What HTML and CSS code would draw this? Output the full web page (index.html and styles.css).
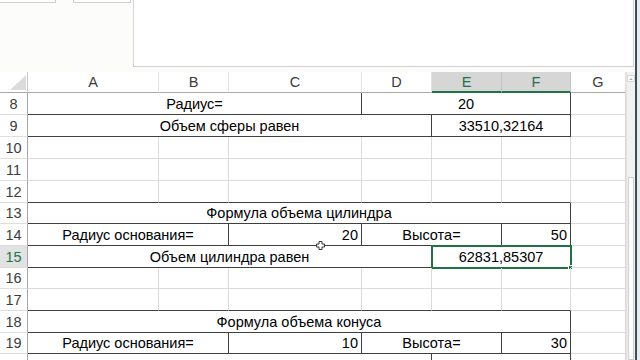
FILE: index.html
```html
<!DOCTYPE html>
<html lang="ru">
<head>
<meta charset="utf-8">
<title>Excel</title>
<link rel="stylesheet" href="styles.css">
</head>
<body>
<div class="app">
  <div class="main">
    <div class="top">
      <div class="tabs">
        <span class="tb tb1"></span>
        <span class="tb tb2"></span>
      </div>
      <div class="fbar"></div>
    </div>
    <div class="sheetwrap">
      <div class="grid">
        <div class="corner"><svg width="28" height="21" viewBox="0 0 28 21"><polygon points="10,18 26,18 26,3" fill="#dcdcdc"/></svg></div>
        <div class="ch">A</div>
        <div class="ch">B</div>
        <div class="ch">C</div>
        <div class="ch">D</div>
        <div class="ch sel">E</div>
        <div class="ch sel">F</div>
        <div class="ch">G</div>

        <div class="rh">8</div>
        <div class="c t s3 ctr">Радиус=</div>
        <div class="c t s3 ctr">20</div>
        <div class="c"></div>

        <div class="rh">9</div>
        <div class="c t s4 ctr">Объем сферы равен</div>
        <div class="c t s2 ctr">33510,32164</div>
        <div class="c"></div>

        <div class="rh">10</div>
        <div class="c"></div><div class="c"></div><div class="c"></div><div class="c"></div><div class="c"></div><div class="c"></div><div class="c"></div>

        <div class="rh">11</div>
        <div class="c"></div><div class="c"></div><div class="c"></div><div class="c"></div><div class="c"></div><div class="c"></div><div class="c"></div>

        <div class="rh">12</div>
        <div class="c bb"></div><div class="c bb"></div><div class="c bb"></div><div class="c bb"></div><div class="c bb"></div><div class="c bb"></div><div class="c"></div>

        <div class="rh">13</div>
        <div class="c t s6 ctr">Формула объема цилиндра</div>
        <div class="c"></div>

        <div class="rh">14</div>
        <div class="c t s2 ctr">Радиус основания=</div>
        <div class="c t rt">20<svg class="cursor" width="9" height="9" viewBox="0 0 9 9"><path d="M3 0.5h3v2.5h2.5v3h-2.5v2.5h-3v-2.5h-2.5v-3h2.5z" fill="#fff" stroke="#333" stroke-width="1"/></svg></div>
        <div class="c t s2 ctr">Высота=</div>
        <div class="c t rt">50</div>
        <div class="c"></div>

        <div class="rh rsel">15</div>
        <div class="c t s4 ctr">Объем цилиндра равен</div>
        <div class="c t s2 ctr active">62831,85307<span class="handle"></span></div>
        <div class="c"></div>

        <div class="rh">16</div>
        <div class="c"></div><div class="c"></div><div class="c"></div><div class="c"></div><div class="c"></div><div class="c"></div><div class="c"></div>

        <div class="rh">17</div>
        <div class="c bb"></div><div class="c bb"></div><div class="c bb"></div><div class="c bb"></div><div class="c bb"></div><div class="c bb"></div><div class="c"></div>

        <div class="rh">18</div>
        <div class="c t s6 ctr">Формула объема конуса</div>
        <div class="c"></div>

        <div class="rh">19</div>
        <div class="c t s2 ctr">Радиус основания=</div>
        <div class="c t rt">10</div>
        <div class="c t s2 ctr">Высота=</div>
        <div class="c t rt">30</div>
        <div class="c"></div>

        <div class="rh rlast"></div>
        <div class="c t s4"></div>
        <div class="c t s2"></div>
        <div class="c"></div>
      </div>
      <div class="vscroll">
        <div class="up"><svg width="7" height="6" viewBox="0 0 7 6"><polygon points="1.5,4 3.5,2 5.5,4" fill="#8a8a8a"/></svg></div>
        <div class="thumb"></div>
      </div>
    </div>
  </div>
  <div class="edge"></div>
  <div class="rest"></div>
</div>
</body>
</html>
```

FILE: styles.css
```css
* { box-sizing: border-box; }
html, body { margin: 0; padding: 0; }
body {
  width: 640px;
  height: 360px;
  overflow: hidden;
  background: #fff;
  font-family: "Liberation Sans", Arial, sans-serif;
  font-size: 14.5px;
  color: #000;
}
.app {
  display: flex;
  width: 640px;
  height: 360px;
}
.main {
  width: 635px;
  height: 360px;
  display: flex;
  flex-direction: column;
  overflow: hidden;
}
.edge {
  width: 2px;
  background: #3b4e5c;
}
.rest {
  width: 3px;
  background: #e9ecee;
}
.top {
  height: 72px;
  flex-shrink: 0;
  display: flex;
  background: #fcfcfa;
}
.tabs {
  width: 133px;
  display: flex;
  gap: 17px;
  align-items: flex-start;
}
.tb {
  display: block;
  height: 3px;
  border-right: 1px solid #cfcfcf;
  border-bottom: 1px solid #cfcfcf;
  background: #fff;
}
.tb1 { width: 56px; }
.tb2 { width: 58px; border-left: 1px solid #cfcfcf; }
.fbar {
  width: 501px;
  height: 67px;
  background: #fff;
  border-left: 1px solid #d2d2d2;
  border-bottom: 1px solid #d2d2d2;
  border-right: 1px solid #d2d2d2;
}
.sheetwrap {
  flex: 1;
  min-height: 0;
  display: flex;
  overflow: hidden;
}
.grid {
  width: 626px;
  flex-shrink: 0;
  display: grid;
  grid-template-columns: 28px 131px 70px 133px 70px 70px 69px 55px;
  grid-template-rows: 21px 22px 22px 22px 22px 22px 21px 22px 22px 21px 22px 22px 21px 22px;
  align-content: start;
}
.corner {
  border-right: 1px solid #c8c8c8;
  border-bottom: 1px solid #a9a9a9;
  background: #fff;
}
.corner svg { display: block; }
.ch {
  display: flex;
  align-items: center;
  justify-content: center;
  color: #3c3c3c;
  font-size: 14.5px;
  border-right: 1px solid #e3e3e3;
  border-bottom: 1px solid #a9a9a9;
  background: #fff;
}
.ch.sel {
  background: #d6d6d6;
  color: #217346;
  border-right-color: #c4c4c4;
  border-bottom: 2px solid #217346;
  padding-top: 1px;
}
.rh {
  display: flex;
  align-items: center;
  justify-content: center;
  color: #3c3c3c;
  font-size: 14.5px;
  border-right: 1px solid #a9a9a9;
  border-bottom: 1px solid #dedede;
  background: #fff;
}
.rh.rsel {
  background: #e2e2e2;
  color: #217346;
}
.c {
  display: flex;
  align-items: center;
  border-right: 1px solid #dadada;
  border-bottom: 1px solid #dadada;
  white-space: nowrap;
  position: relative;
  padding: 0 3px;
}
.c.bb { border-bottom-color: #404040; }
.c.t {
  border-right-color: #404040;
  border-bottom-color: #404040;
}
.s2 { grid-column: span 2; }
.s3 { grid-column: span 3; }
.s4 { grid-column: span 4; }
.s6 { grid-column: span 6; }
.ctr { justify-content: center; }
.rt { justify-content: flex-end; }
.active {
  outline: 2px solid #217346;
  outline-offset: -1px;
}
.handle {
  position: absolute;
  right: -3px;
  bottom: -3px;
  width: 5px;
  height: 5px;
  background: #217346;
  border: 1px solid #fff;
}
.cursor {
  position: absolute;
  right: 36px;
  bottom: -5px;
}
.vscroll {
  width: 9px;
  background: #f1f1f1;
  border-left: 1px solid #e2e2e2;
  display: flex;
  flex-direction: column;
  align-items: center;
}
.up {
  margin-top: 3px;
  width: 8px;
  height: 7px;
  background: #fff;
  border: 1px solid #d8d8d8;
  display: flex;
  align-items: center;
  justify-content: center;
}
.up svg { display: block; }
.thumb {
  margin-top: 95px;
  width: 6px;
  flex: 1;
  background: #fdfdfd;
  border: 1px solid #cfcfcf;
}
```
